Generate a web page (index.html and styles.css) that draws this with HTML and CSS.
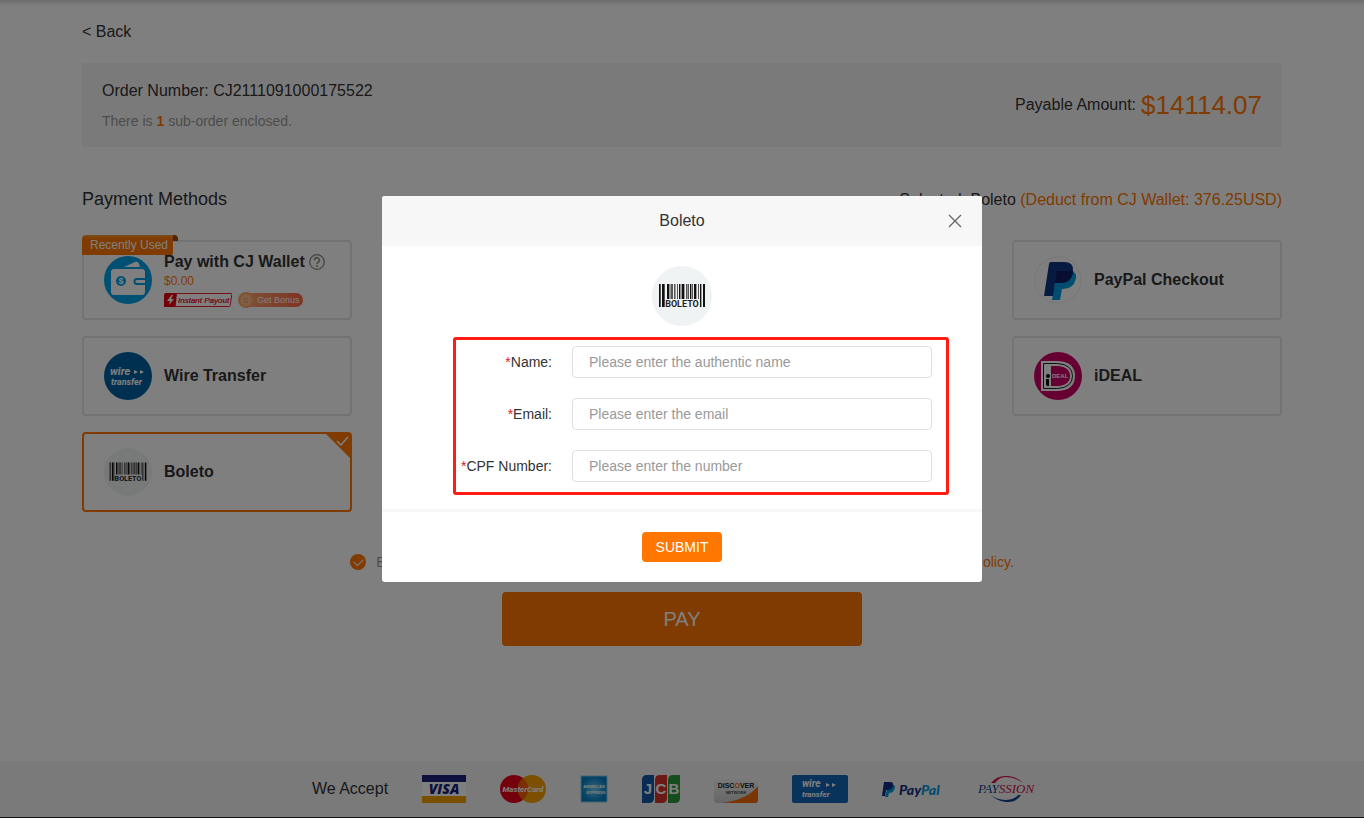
FILE: index.html
```html
<!DOCTYPE html>
<html lang="en">
<head>
    <meta charset="UTF-8">
    <meta name="viewport" content="width=device-width, initial-scale=1.0">
    <title>Payment</title>
    <link rel="stylesheet" href="styles.css">
</head>
<body>
    <!-- Shared logo, used in the card and in the dialog -->
    <svg class="sprite" aria-hidden="true">
        <symbol id="boletoLogo" viewBox="0 0 60 60">
            <circle cx="30" cy="30" r="30" fill="#f0f3f3"/>
            <path fill="#111" d="M7 18h1v23h-1zM10 18h2v23h-2zM15 18h2v15h-2zM27 18h1v15h-1zM30 18h2v15h-2zM38 18h1v15h-1zM42 18h2v15h-2zM48 18h1v23h-1zM51 18h2v23h-2z"/>
            <path fill="#555" d="M8 18h1v23h-1zM12 18h1v23h-1zM19 18h2v15h-2zM22 18h1v15h-1zM25 18h1v15h-1zM34 18h1v15h-1zM36 18h1v15h-1zM40 18h1v15h-1zM46 18h1v15h-1z"/>
            <path fill="#999" d="M17 18h2v15h-2zM23 18h1v15h-1zM28 18h2v15h-2zM32 18h1v15h-1zM35 18h1v15h-1zM39 18h1v15h-1zM44 18h1v15h-1zM49 18h1v23h-1z"/>
            <text x="30" y="41" text-anchor="middle" class="boleto-text" font-size="9" fill="#222">BOLETO</text>
        </symbol>
    </svg>

    <main class="container">
        <a href="#" class="back">&lt; Back</a>

        <div class="order">
            <div>
                <p class="order-number">Order Number: CJ2111091000175522</p>
                <p class="order-sub">There is <b>1</b> sub-order enclosed.</p>
            </div>
            <p class="amount">Payable Amount: <span>$14114.07</span></p>
        </div>

        <div class="methods-head">
            <h2>Payment Methods</h2>
            <p>Selected: Boleto <span>(Deduct from CJ Wallet: 376.25USD)</span></p>
        </div>

        <div class="methods">
            <label class="card">
                <input type="radio" name="method">
                <span class="badge">Recently Used</span>
                <svg class="logo" viewBox="0 0 48 48">
                    <circle cx="24" cy="24" r="24" fill="#00a0e9"/>
                    <path d="M20 11L31 6q3-1 4 2l1 3z" fill="#fff"/>
                    <path d="M10 13h28q3 0 3 3v6h-8a4 4 0 0 0 0 7h8v7q0 3-3 3H10q-3 0-3-3V16q0-3 3-3z" fill="#fff"/>
                    <circle cx="17" cy="25" r="5" fill="#00a0e9"/>
                    <text x="17" y="28" text-anchor="middle" font-size="9" font-weight="bold" fill="#fff">$</text>
                    <path d="M41 22h-8a3.500 3.500 0 0 0 0 7h8z" fill="#00a0e9"/>
                    <path d="M41 24h-8a1.500 1.500 0 0 0 0 3h8z" fill="#fff"/>
                </svg>
                <span class="info">
                    <span class="name">Pay with CJ Wallet
                        <svg class="help" viewBox="0 0 16 16">
                            <circle cx="8" cy="8" r="7.300" fill="none" stroke="#888" stroke-width="1.300"/>
                            <path d="M5.600 6.200a2.400 2.400 0 1 1 3.500 2.100q-1.100.6-1.100 1.700" fill="none" stroke="#888" stroke-width="1.500"/>
                            <circle cx="8" cy="12" r="1" fill="#888"/>
                        </svg>
                    </span>
                    <span class="balance">$0.00</span>
                    <span class="tags">
                        <svg width="68" height="14" viewBox="0 0 68 14">
                            <path d="M2 .5h65q1 0 .8 1l-1.600 11q-.2 1-1 1H1z" fill="#fff" stroke="#f02030"/>
                            <path d="M2 0h11l-1.500 14H0V2q0-2 2-2z" fill="#e60012"/>
                            <path d="M7.500 2L3 8h3l-1 4 5-6H7l2-4z" fill="#fff"/>
                            <text x="14" y="10" font-size="8" font-style="italic" stroke="#e60012" stroke-width=".2" fill="#e60012">Instant Payout</text>
                        </svg>
                        <svg width="66" height="16" viewBox="0 0 66 16">
                            <defs>
                                <linearGradient id="bonus"><stop offset="0" stop-color="#ffa36a"/><stop offset="1" stop-color="#ff6846"/></linearGradient>
                            </defs>
                            <rect x="6" y="1" width="59" height="14" rx="7" fill="url(#bonus)"/>
                            <circle cx="8" cy="8" r="8" fill="#ffa66d"/>
                            <circle cx="8" cy="8" r="5.500" fill="#ffc18e"/>
                            <text x="8" y="11" text-anchor="middle" font-size="8" font-weight="bold" fill="#ff9c60">S</text>
                            <text x="19" y="11" font-size="9" fill="#fff">Get Bonus</text>
                        </svg>
                    </span>
                </span>
            </label>

            <label class="card last-col">
                <input type="radio" name="method">
                <svg class="logo" viewBox="0 0 48 48">
                    <circle cx="24" cy="24" r="23" fill="#fff" stroke="#eee"/>
                    <path d="M37 14q6 3 5 8-2 11-13 11h-1l-2 11h-8l3-18z" fill="#009cde"/>
                    <path d="M17 6h13q10 0 9 9-1 12-13 12h-5l-2 13h-9l5-32q0-2 2-2z" fill="#0e3585"/>
                    <path d="M23 15h16q-1 12-13 12h-5z" fill="#0e1d63"/>
                </svg>
                <span class="name">PayPal Checkout</span>
            </label>

            <label class="card">
                <input type="radio" name="method">
                <svg class="logo" viewBox="0 0 48 48">
                    <circle cx="24" cy="24" r="24" fill="#00609e"/>
                    <g class="wire" fill="#fff">
                        <text x="6" y="23" font-size="11">wire</text>
                        <text x="7" y="33" font-size="9">transfer</text>
                        <path d="M30 18l4 2-4 2zM36 18l4 2-4 2z"/>
                    </g>
                </svg>
                <span class="name">Wire Transfer</span>
            </label>

            <label class="card last-col">
                <input type="radio" name="method">
                <svg class="logo" viewBox="0 0 48 48">
                    <circle cx="24" cy="24" r="24" fill="#cc0066"/>
                    <path d="M7 9h17q17 1 17 15T24 39H7z" fill="#fff"/>
                    <path d="M9.500 11.500h14q15 1 15 12.500t-15 12.500h-14z" fill="none" stroke="#222"/>
                    <path d="M17 14h7q12 1 12 10t-12 10h-7z" fill="#cc0066"/>
                    <circle cx="14" cy="24" r="2" fill="#111"/>
                    <path d="M12 27h3v7h-1q-2 0-2-2z" fill="#111"/>
                    <text x="18" y="26" font-size="6" font-weight="bold" fill="#fff">DEAL</text>
                </svg>
                <span class="name">iDEAL</span>
            </label>

            <label class="card selected">
                <input type="radio" name="method" checked>
                <svg class="logo"><use href="#boletoLogo"/></svg>
                <span class="name">Boleto</span>
                <svg class="corner" viewBox="0 0 26 26">
                    <path d="M0 0h26v26z" fill="#ff7700"/>
                    <path d="M12 8l4 4 7-8" fill="none" stroke="#fff" stroke-width="1.500"/>
                </svg>
            </label>
        </div>

        <div class="agree">
            <input type="checkbox" id="agree" checked>
            <label for="agree">By clicking Pay you confirm that you have read and agreed to <a href="#">CJ Terms and Conditions, Refund Policy.</a></label>
        </div>

        <button type="button" class="pay">PAY</button>
    </main>

    <footer class="footer">
        <span>We Accept</span>
        <svg width="44" height="28" viewBox="0 0 44 28">
            <path d="M0 0h44v28H0z" fill="#fff"/>
            <path d="M0 0h44v7H0z" fill="#1a1f79"/>
            <path d="M0 21h44v7H0z" fill="#f0a000"/>
            <text x="22" y="19" text-anchor="middle" class="visa" font-size="14" fill="#1a1f79">VISA</text>
        </svg>
        <svg width="46" height="28" viewBox="0 0 46 28">
            <circle cx="14" cy="14" r="14" fill="#eb001b"/>
            <circle cx="32" cy="14" r="14" fill="#fa9f00"/>
            <path d="M23 3a14 14 0 0 1 0 22 14 14 0 0 1 0-22z" fill="#f2600a"/>
            <text x="23" y="17" text-anchor="middle" class="wire" font-size="8" fill="#fff">MasterCard</text>
        </svg>
        <svg width="28" height="28" viewBox="0 0 28 28">
            <defs>
                <radialGradient id="amex"><stop offset="0" stop-color="#6fc8ef"/><stop offset="1" stop-color="#0080c4"/></radialGradient>
            </defs>
            <path d="M1 1h26v26H1z" fill="url(#amex)" stroke="#8bcbe8"/>
            <g font-size="4" font-weight="bold" fill="#fff" text-anchor="middle">
                <text x="14" y="13">AMERICAN</text>
                <text x="16" y="19">EXPRESS</text>
            </g>
        </svg>
        <svg width="38" height="28" viewBox="0 0 38 28">
            <path d="M5 0h7v23q0 5-5 5H0V5q0-5 5-5z" fill="#1556a8"/>
            <path d="M18 0h7v23q0 5-5 5h-7V5q0-5 5-5z" fill="#d8332a"/>
            <path d="M31 0h7v23q0 5-5 5h-7V5q0-5 5-5z" fill="#2c9a3e"/>
            <g class="jcb" font-size="15" fill="#fff" text-anchor="middle">
                <text x="6" y="19">J</text>
                <text x="19" y="19">C</text>
                <text x="32" y="19">B</text>
            </g>
        </svg>
        <svg width="44" height="28" viewBox="0 0 44 28">
            <defs>
                <linearGradient id="disc" x2="0" y2="1"><stop offset="0" stop-color="#fafafa"/><stop offset="1" stop-color="#ccc"/></linearGradient>
            </defs>
            <rect width="44" height="28" rx="3" fill="url(#disc)"/>
            <path d="M44 11v14q0 3-3 3H8Q33 25 44 11z" fill="#f76b00"/>
            <text x="22" y="13" text-anchor="middle" font-size="7" font-weight="bold" fill="#222">DISC<tspan fill="#f76b00">O</tspan>VER</text>
            <text x="22" y="19" text-anchor="middle" font-size="4" font-weight="bold" fill="#444">NETWORK</text>
        </svg>
        <svg width="56" height="28" viewBox="0 0 56 28">
            <rect width="56" height="28" rx="2" fill="#1467b8"/>
            <g class="wire" fill="#fff">
                <text x="10" y="12" font-size="10">wire</text>
                <text x="10" y="22" font-size="8">transfer</text>
                <path d="M34 8l4 2-4 2zM40 8l4 2-4 2z"/>
            </g>
        </svg>
        <svg width="62" height="28" viewBox="0 0 62 28">
            <path d="M6 10h6q2 2 0 5-1 3-5 3l-1 4H3z" fill="#009cde"/>
            <path d="M2 7h6q4 0 3 4t-5 4H4l-1 6H0z" fill="#0e2f82"/>
            <text x="17" y="20" font-size="14" class="paypal" fill="#153083">Pay<tspan fill="#0099dd">Pal</tspan></text>
        </svg>
        <svg width="74" height="28" viewBox="0 0 74 28">
            <path d="M13 8Q19 0 30 1q10 1 15 7-8-6-17-6-7 0-11 6z" fill="#d31145"/>
            <path d="M13 20q9 7 21 4 5-2 6-4h3q-5 8-15 7-9-1-15-7z" fill="#123f8c"/>
            <text x="0" y="18" class="payssion" font-size="13" fill="#123f8c">PAY<tspan fill="#d31145">SSION</tspan></text>
        </svg>
    </footer>

    <div class="overlay">
        <form class="modal" role="dialog" aria-labelledby="modalTitle">
            <div class="modal-head">
                <h3 id="modalTitle">Boleto</h3>
                <button type="button" class="close" aria-label="Close">
                    <svg viewBox="0 0 14 14"><path d="M1 1l12 12M13 1L1 13" fill="none" stroke="#666" stroke-width="1.300"/></svg>
                </button>
            </div>
            <div class="modal-body">
                <svg class="modal-logo"><use href="#boletoLogo"/></svg>
                <div class="fields">
                    <label for="name"><i>*</i>Name:</label>
                    <input type="text" id="name" placeholder="Please enter the authentic name">
                    <label for="email"><i>*</i>Email:</label>
                    <input type="text" id="email" placeholder="Please enter the email">
                    <label for="cpf"><i>*</i>CPF Number:</label>
                    <input type="text" id="cpf" placeholder="Please enter the number">
                </div>
            </div>
            <div class="modal-foot">
                <button type="button" class="submit">SUBMIT</button>
            </div>
        </form>
    </div>
</body>
</html>
```
FILE: styles.css
```css
* {
    box-sizing: border-box;
}
body {
    display: flex;
    flex-direction: column;
    min-height: 100vh;
    margin: 0;
    font-family: "Liberation Sans", Arial, sans-serif;
    font-size: 16px;
    color: #333;
    background: linear-gradient(#d8d8d8, #fff 6px);
}
p, h2, h3 {
    margin: 0;
    font-weight: normal;
}
a {
    color: #ff7700;
    text-decoration: none;
}
button {
    font-family: inherit;
    border: none;
    cursor: pointer;
}
svg {
    flex: none;
}
.sprite {
    display: none;
}
.container {
    width: 100%;
    max-width: 1200px;
    margin: 0 auto;
    padding-top: 22px;
}
.back {
    display: block;
    line-height: 20px;
    color: #333;
}
.order {
    display: flex;
    justify-content: space-between;
    align-items: center;
    height: 84px;
    margin-top: 21px;
    padding: 0 20px;
    background-color: #f5f5f5;
}
.order-number {
    line-height: 20px;
}
.order-sub {
    margin-top: 12px;
    font-size: 14px;
    line-height: 16px;
    color: #999;
}
.order-sub b {
    color: #ff7700;
}
.amount {
    display: flex;
    align-items: center;
    gap: 5px;
}
.amount span {
    font-size: 26px;
    color: #ff7700;
}
.methods-head {
    display: flex;
    justify-content: space-between;
    align-items: flex-end;
    margin-top: 40px;
}
.methods-head h2 {
    font-size: 18px;
    line-height: 24px;
}
.methods-head p {
    line-height: 22px;
}
.methods-head span {
    color: #ff7700;
}

/* Payment method cards */
.methods {
    display: grid;
    grid-template-columns: repeat(4, 1fr);
    gap: 16px 40px;
    margin-top: 29px;
}
.card {
    position: relative;
    display: flex;
    align-items: center;
    gap: 12px;
    height: 80px;
    padding: 0 20px;
    border: 2px solid #e6e6e6;
    border-radius: 4px;
    cursor: pointer;
}
.card input {
    position: absolute;
    opacity: 0;
}
.card.last-col {
    grid-column: 4;
}
.card.selected {
    border-color: #ff7700;
}
.logo {
    width: 48px;
    height: 48px;
}
.name {
    display: flex;
    align-items: center;
    gap: 4px;
    font-weight: bold;
    line-height: 20px;
}
.help {
    width: 16px;
    height: 16px;
}
.balance {
    display: block;
    font-size: 12px;
    line-height: 18px;
    color: #ff7700;
}
.tags {
    display: flex;
    align-items: center;
    gap: 6px;
    margin-top: 2px;
}
.badge {
    position: absolute;
    top: -7px;
    left: -2px;
    padding: 0 5px 0 8px;
    font-size: 12px;
    line-height: 20px;
    color: #fff;
    background: linear-gradient(#ff9a30, #ff7700 4px);
    border-radius: 4px 0 2px 0;
}
.badge::after {
    content: "";
    position: absolute;
    top: 0;
    left: 100%;
    width: 5px;
    height: 6px;
    background-color: #a04800;
    border-radius: 0 4px 0 0;
}
.corner {
    position: absolute;
    top: -1px;
    right: -1px;
    width: 26px;
    height: 26px;
}
.boleto-text {
    font-family: Roboto, sans-serif;
    font-weight: bold;
}
.wire {
    font-family: Roboto, sans-serif;
    font-weight: bold;
    font-style: italic;
}
.visa {
    font-family: "Open Sans", sans-serif;
    font-weight: 800;
    font-style: italic;
}
.jcb {
    font-family: "Liberation Sans", sans-serif;
    font-weight: bold;
}
.paypal {
    font-family: Lato, sans-serif;
    font-weight: 900;
    font-style: italic;
}
.payssion {
    font-family: "Liberation Serif", serif;
    font-style: italic;
}

.agree {
    display: flex;
    justify-content: center;
    align-items: center;
    gap: 10px;
    margin-top: 42px;
    font-size: 14px;
    line-height: 16px;
    color: #999;
}
.agree input {
    appearance: none;
    position: relative;
    width: 16px;
    height: 16px;
    margin: 0;
    background-color: #ff7700;
    border-radius: 50%;
}
.agree input::after {
    content: "";
    position: absolute;
    top: 4px;
    left: 4px;
    width: 8px;
    height: 5px;
    border: solid #fff;
    border-width: 0 0 1px 1px;
    transform: rotate(-45deg);
}
.pay {
    display: block;
    width: 360px;
    height: 54px;
    margin: 22px auto;
    font-size: 20px;
    color: #fff;
    background-color: #ff7700;
    border-radius: 4px;
}
.footer {
    display: flex;
    justify-content: center;
    align-items: center;
    gap: 34px;
    height: 57px;
    margin-top: auto;
    background-color: #f5f5f5;
    border-bottom: 1px solid #222;
}

/* Dialog */
.overlay {
    position: fixed;
    inset: 0;
    padding-top: 196px;
    background-color: rgba(0, 0, 0, 0.5);
}
.modal {
    width: 600px;
    margin: 0 auto;
    background-color: #fff;
    border-radius: 3px;
    overflow: hidden;
}
.modal-head {
    position: relative;
    background-color: #f7f7f7;
}
.modal-head h3 {
    font-size: 16px;
    line-height: 50px;
    text-align: center;
}
.close {
    position: absolute;
    top: 15px;
    right: 17px;
    width: 20px;
    height: 20px;
    padding: 3px;
    background: none;
}
.close svg {
    display: block;
    width: 14px;
    height: 14px;
}
.modal-body {
    padding: 20px 33px 14px 71px;
}
.modal-logo {
    display: block;
    width: 60px;
    height: 60px;
    margin-left: 199px;
}
.fields {
    display: grid;
    grid-template-columns: 1fr 360px;
    align-items: center;
    gap: 20px;
    margin-top: 11px;
    padding: 6px 14px 10px 0;
    border: 3px solid #ff1c12;
    border-radius: 3px;
}
.fields label {
    font-size: 14px;
    text-align: right;
    white-space: nowrap;
}
.fields i {
    font-style: normal;
    color: #e02020;
}
.fields input {
    width: 100%;
    height: 32px;
    padding: 0 16px;
    font-family: inherit;
    font-size: 14px;
    border: 1px solid #e0e0e0;
    border-radius: 4px;
}
.fields input::placeholder {
    color: #999;
}
.modal-foot {
    padding: 20px;
    text-align: center;
    border-top: 3px solid #f7f7f7;
}
.submit {
    display: block;
    width: 80px;
    height: 30px;
    margin: 0 auto;
    padding: 0;
    font-size: 14px;
    color: #fff;
    background-color: #ff7700;
    border-radius: 4px;
}
```
